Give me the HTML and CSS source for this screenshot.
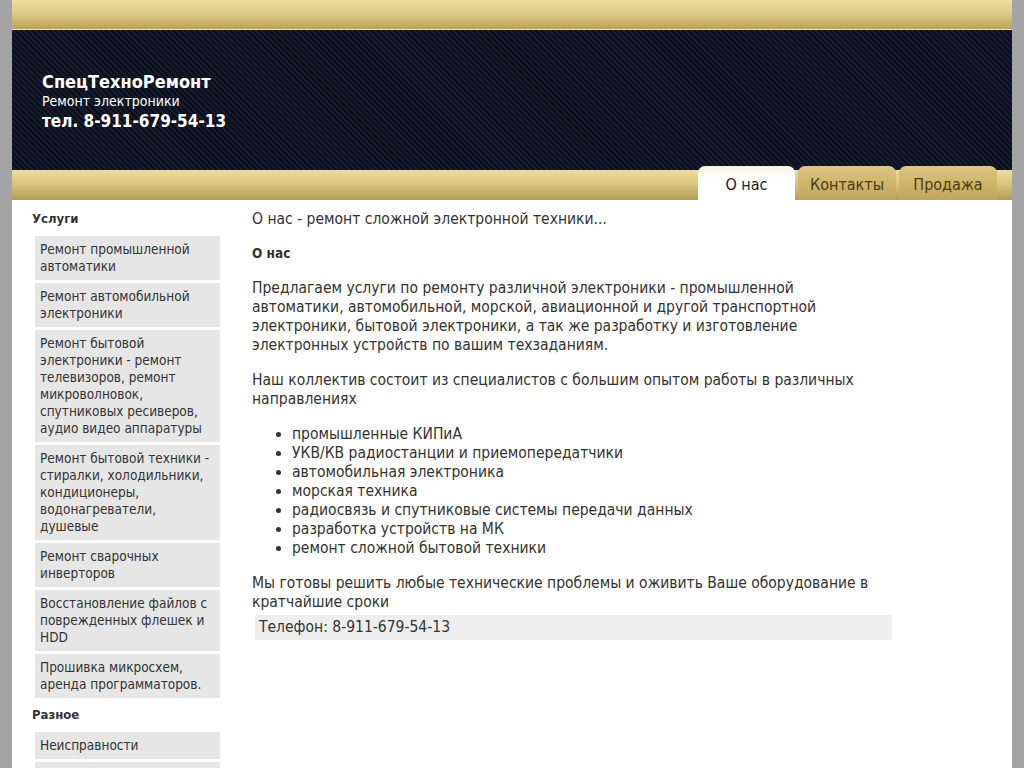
FILE: index.html
```html
<!DOCTYPE html>
<html lang="ru">
<head>
<meta charset="utf-8">
<title>СпецТехноРемонт</title>
<link rel="stylesheet" href="styles.css">
</head>
<body>
<div class="page">
  <div class="topbar"></div>
  <header class="header">
    <div class="brand">
      <div class="brand-name">СпецТехноРемонт</div>
      <div class="brand-sub">Ремонт электроники</div>
      <div class="brand-phone">тел. 8-911-679-54-13</div>
    </div>
  </header>
  <nav class="nav">
    <a class="tab active" href="#">О нас</a>
    <a class="tab" href="#">Контакты</a>
    <a class="tab" href="#">Продажа</a>
  </nav>
  <div class="body">
    <aside class="sidebar">
      <h3 class="side-title">Услуги</h3>
      <ul class="side-menu">
        <li>Ремонт промышленной автоматики</li>
        <li>Ремонт автомобильной электроники</li>
        <li>Ремонт бытовой электроники - ремонт телевизоров, ремонт микроволновок, спутниковых ресиверов, аудио видео аппаратуры</li>
        <li>Ремонт бытовой техники - стиралки, холодильники, кондиционеры, водонагреватели, душевые</li>
        <li>Ремонт сварочных инверторов</li>
        <li>Восстановление файлов с поврежденных флешек и HDD</li>
        <li>Прошивка микросхем, аренда программаторов.</li>
      </ul>
      <h3 class="side-title">Разное</h3>
      <ul class="side-menu">
        <li>Неисправности</li>
        <li>Статьи</li>
      </ul>
    </aside>
    <main class="main">
      <h1 class="title">О нас - ремонт сложной электронной техники...</h1>
      <h2 class="subtitle">О нас</h2>
      <p>Предлагаем услуги по ремонту различной электроники - промышленной автоматики, автомобильной, морской, авиационной и другой транспортной электроники, бытовой электроники, а так же разработку и изготовление электронных устройств по вашим техзаданиям.</p>
      <p>Наш коллектив состоит из специалистов с большим опытом работы в различных направлениях</p>
      <ul class="list">
        <li>промышленные КИПиА</li>
        <li>УКВ/КВ радиостанции и приемопередатчики</li>
        <li>автомобильная электроника</li>
        <li>морская техника</li>
        <li>радиосвязь и спутниковые системы передачи данных</li>
        <li>разработка устройств на МК</li>
        <li>ремонт сложной бытовой техники</li>
      </ul>
      <p class="last">Мы готовы решить любые технические проблемы и оживить Ваше оборудование в кратчайшие сроки</p>
      <div class="phone-box">Телефон: 8-911-679-54-13</div>
    </main>
  </div>
</div>
</body>
</html>
```
FILE: styles.css
```css
html, body {
  margin: 0;
  padding: 0;
  background: #a4a4a4;
}
body {
  font-family: "DejaVu Sans Condensed", "DejaVu Sans", sans-serif;
  font-stretch: condensed;
  color: #333;
}
.page {
  width: 1000px;
  margin: 0 auto;
  background: #fff;
  min-height: 768px;
}
.topbar {
  height: 29px;
  background: linear-gradient(to bottom, #eedd9e 0%, #dcc883 50%, #b9a35c 100%);
  border-bottom: 1px solid #f3e6a8;
}
.header {
  height: 140px;
  background-color: #0e1220;
  background-image: repeating-linear-gradient(45deg, #0b0f1b 0px, #0b0f1b 2px, #171c2c 2px, #171c2c 4px);
  display: flex;
  align-items: center;
  padding-left: 30px;
}
.brand {
  color: #fff;
  margin-top: 2px;
}
.brand-name {
  font-size: 18px;
  font-weight: bold;
  line-height: 22px;
}
.brand-sub {
  font-size: 14px;
  line-height: 17px;
}
.brand-phone {
  font-size: 17px;
  font-weight: bold;
  line-height: 22px;
}
.nav {
  height: 30px;
  background: linear-gradient(to bottom, #ecdc9c 0%, #d8c27d 50%, #b39c55 100%);
  display: flex;
  justify-content: flex-end;
  align-items: flex-end;
  padding-right: 15px;
  gap: 3px;
}
.tab {
  display: block;
  height: 34px;
  margin-top: -4px;
  box-sizing: border-box;
  padding-top: 3px;
  line-height: 32px;
  text-align: center;
  font-size: 16px;
  text-decoration: none;
  color: #4b3c14;
  border-radius: 7px 7px 0 0;
  background: linear-gradient(to bottom, #dcc782 0%, #cdb56b 50%, #bfa65c 100%);
  width: 98px;
}
.tab.active {
  width: 97px;
  color: #222;
  background: linear-gradient(to bottom, #f8f3e0 0%, #ffffff 40%, #ffffff 100%);
}
.body {
  display: flex;
  align-items: flex-start;
}
.sidebar {
  width: 188px;
  padding-left: 20px;
  padding-top: 10px;
  flex: none;
}
.side-title {
  font-size: 13px;
  font-weight: bold;
  color: #333;
  margin: 0 0 9px 0;
  line-height: 17px;
}
.side-menu {
  list-style: none;
  margin: 0 0 8px 3px;
  padding: 0;
  display: flex;
  flex-direction: column;
  gap: 3px;
}
.side-menu li {
  background: #e6e6e6;
  font-size: 13.5px;
  line-height: 17px;
  padding: 5px;
  color: #333;
}
.main {
  flex: 1;
  padding-left: 32px;
  padding-right: 120px;
  padding-top: 10px;
  font-size: 15.5px;
  line-height: 19px;
}
.title {
  font-size: 15.5px;
  font-weight: normal;
  margin: 0 0 15px 0;
  line-height: 19px;
}
.subtitle {
  font-size: 13.5px;
  font-weight: bold;
  margin: 0 0 16px 0;
  line-height: 19px;
}
.main p {
  margin: 0 12px 16px 0;
}
.list {
  margin: 0 0 16px 0;
  padding-left: 40px;
}
.main p.last {
  margin-bottom: 3px;
}
.phone-box {
  background: #eeeeee;
  margin-left: 3px;
  padding: 3px 4px;
}
```
